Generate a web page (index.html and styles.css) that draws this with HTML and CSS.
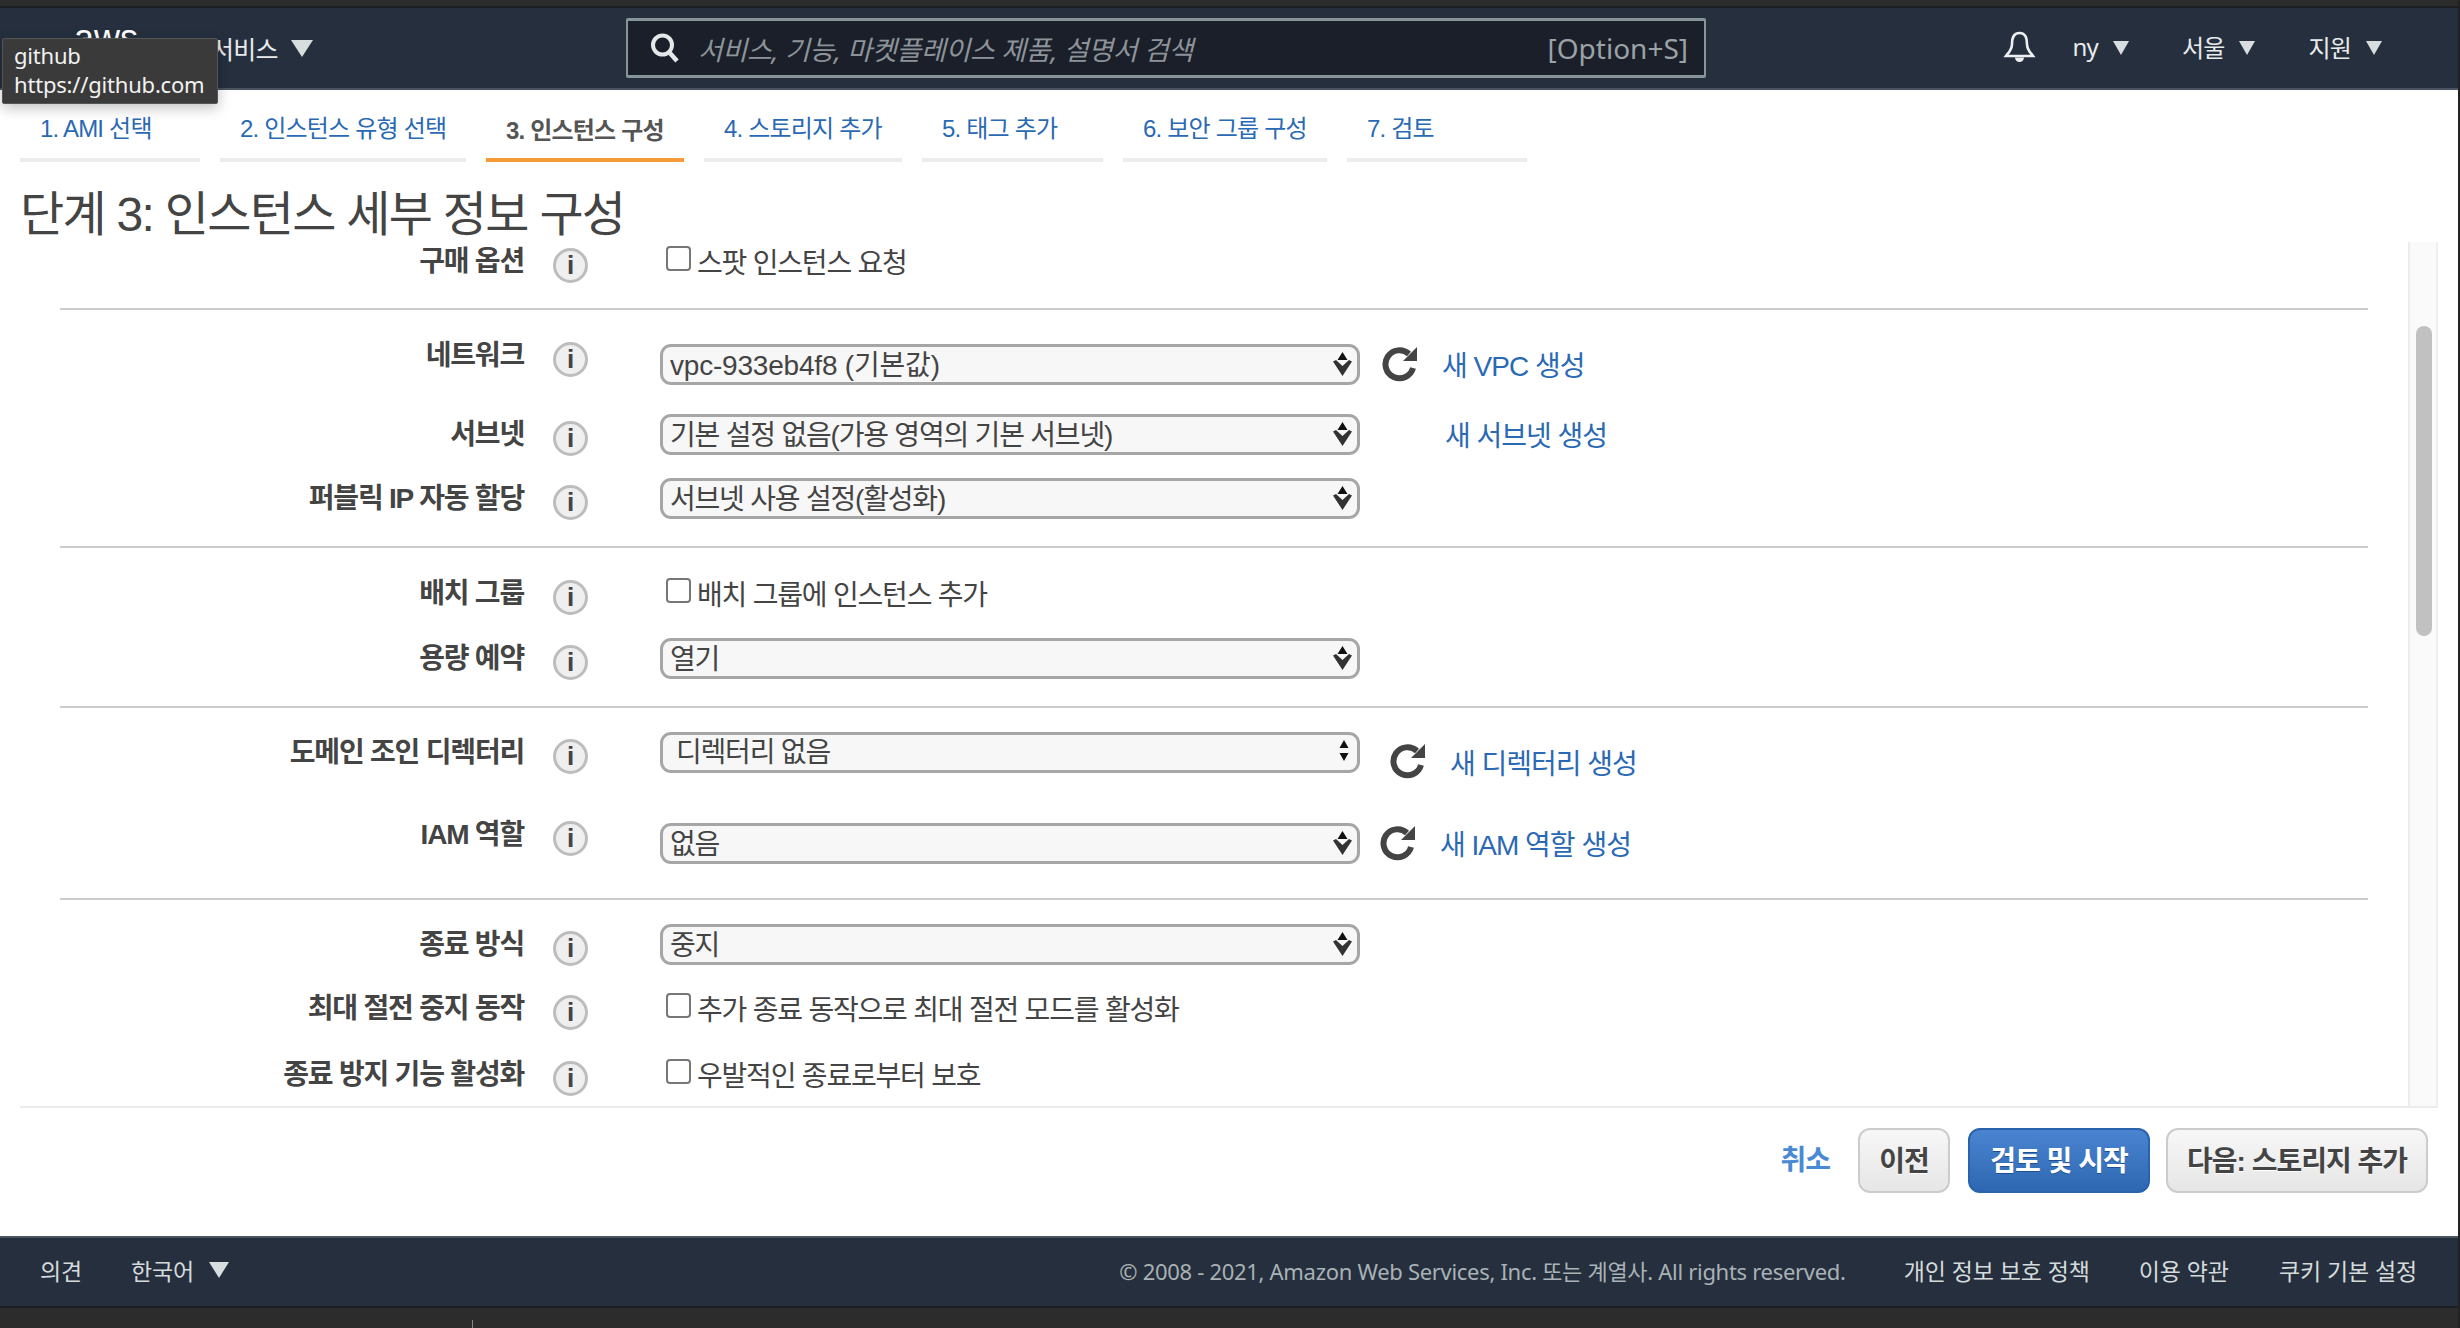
FILE: index.html
```html
<!DOCTYPE html>
<html lang="ko">
<head>
<meta charset="utf-8">
<title>인스턴스 세부 정보 구성</title>
<link rel="stylesheet" href="styles.css">
</head>
<body>
<div class="page">
  <div class="chrome-top"></div>
  <header class="nav">
    <div class="logo">aws</div>
    <div class="nav-services">서비스<span class="caret caret-lg"></span></div>
    <div class="search">
      <svg class="search-icon" viewBox="0 0 30 30"><circle cx="12.5" cy="12" r="9.5" fill="none" stroke="#e4e8e8" stroke-width="4"/><path d="M19 19 L27 28" stroke="#e4e8e8" stroke-width="4.5"/></svg>
      <span class="search-text">서비스, 기능, 마켓플레이스 제품, 설명서 검색</span>
      <span class="search-key">[Option+S]</span>
    </div>
    <div class="nav-right">
      <svg class="bell" viewBox="0 0 35 32"><path d="M17.5 2 C11 2 10 8 10 13 C10 19 7 21 4 25 L31 25 C28 21 25 19 25 13 C25 8 24 2 17.5 2 Z" fill="none" stroke="#eef0f0" stroke-width="2.6"/><path d="M13 26.5 A4.5 4.5 0 0 0 22 26.5 Z" fill="#eef0f0"/></svg>
      <span class="nav-item nav-ny">ny<span class="caret"></span></span>
      <span class="nav-item nav-region">서울<span class="caret"></span></span>
      <span class="nav-item nav-support">지원<span class="caret"></span></span>
    </div>
  </header>

  <div class="tooltip">github<br>https://github.com</div>

  <nav class="tabs">
    <a class="tab">1. AMI 선택</a>
    <a class="tab">2. 인스턴스 유형 선택</a>
    <a class="tab tab-active">3. 인스턴스 구성</a>
    <a class="tab">4. 스토리지 추가</a>
    <a class="tab">5. 태그 추가</a>
    <a class="tab">6. 보안 그룹 구성</a>
    <a class="tab">7. 검토</a>
  </nav>

  <main class="main">
    <h1 class="title">단계 3: 인스턴스 세부 정보 구성</h1>
    <div class="panel">
      <div class="form">
        <section class="section s1">
          <div class="row">
            <label class="label">구매 옵션</label><span class="info">i</span>
            <div class="control"><span class="check"></span><span class="check-text">스팟 인스턴스 요청</span></div>
          </div>
        </section>
        <section class="section s2">
          <div class="row">
            <label class="label">네트워크</label><span class="info">i</span>
            <div class="control low">
              <div class="select select-latin"><select><option>vpc-933eb4f8 (기본값)</option></select><svg class="arrows" viewBox="0 0 19 24"><path d="M9.5 0 L14.5 8 L4.5 8 Z" fill="#111"/><path d="M0 9.5 L3 8 L9.5 14 L16 8 L19 9.5 L9.5 24 Z" fill="#333"/></svg></div>
              <svg class="refresh" viewBox="0 0 36 36"><path d="M27 8 A14 14 0 1 0 31 22" fill="none" stroke="#444" stroke-width="6"/><path d="M35 1 L35 15 L21 15 Z" fill="#444"/></svg>
              <a class="link link-vpc">새 VPC 생성</a>
            </div>
          </div>
          <div class="row gap-43">
            <label class="label">서브넷</label><span class="info">i</span>
            <div class="control">
              <div class="select"><select><option>기본 설정 없음(가용 영역의 기본 서브넷)</option></select><svg class="arrows" viewBox="0 0 19 24"><path d="M9.5 0 L14.5 8 L4.5 8 Z" fill="#111"/><path d="M0 9.5 L3 8 L9.5 14 L16 8 L19 9.5 L9.5 24 Z" fill="#333"/></svg></div>
              <a class="link link-subnet">새 서브넷 생성</a>
            </div>
          </div>
          <div class="row gap-28">
            <label class="label">퍼블릭 IP 자동 할당</label><span class="info">i</span>
            <div class="control">
              <div class="select"><select><option>서브넷 사용 설정(활성화)</option></select><svg class="arrows" viewBox="0 0 19 24"><path d="M9.5 0 L14.5 8 L4.5 8 Z" fill="#111"/><path d="M0 9.5 L3 8 L9.5 14 L16 8 L19 9.5 L9.5 24 Z" fill="#333"/></svg></div>
            </div>
          </div>
        </section>
        <section class="section s3">
          <div class="row">
            <label class="label">배치 그룹</label><span class="info">i</span>
            <div class="control"><span class="check"></span><span class="check-text">배치 그룹에 인스턴스 추가</span></div>
          </div>
          <div class="row gap-29">
            <label class="label">용량 예약</label><span class="info">i</span>
            <div class="control">
              <div class="select"><select><option>열기</option></select><svg class="arrows" viewBox="0 0 19 24"><path d="M9.5 0 L14.5 8 L4.5 8 Z" fill="#111"/><path d="M0 9.5 L3 8 L9.5 14 L16 8 L19 9.5 L9.5 24 Z" fill="#333"/></svg></div>
            </div>
          </div>
        </section>
        <section class="section s4">
          <div class="row">
            <label class="label">도메인 조인 디렉터리</label><span class="info">i</span>
            <div class="control">
              <div class="select select-native"><select><option>디렉터리 없음</option></select><svg class="arrows arrows-sm" viewBox="0 0 10 22"><path d="M5 0 L9.5 8 L0.5 8 Z" fill="#111"/><path d="M0.5 13 L9.5 13 L5 21 Z" fill="#111"/></svg></div>
              <svg class="refresh refresh-dir" viewBox="0 0 36 36"><path d="M27 8 A14 14 0 1 0 31 22" fill="none" stroke="#444" stroke-width="6"/><path d="M35 1 L35 15 L21 15 Z" fill="#444"/></svg>
              <a class="link link-dir">새 디렉터리 생성</a>
            </div>
          </div>
          <div class="row gap-46">
            <label class="label">IAM 역할</label><span class="info">i</span>
            <div class="control low">
              <div class="select"><select><option>없음</option></select><svg class="arrows" viewBox="0 0 19 24"><path d="M9.5 0 L14.5 8 L4.5 8 Z" fill="#111"/><path d="M0 9.5 L3 8 L9.5 14 L16 8 L19 9.5 L9.5 24 Z" fill="#333"/></svg></div>
              <svg class="refresh refresh-iam" viewBox="0 0 36 36"><path d="M27 8 A14 14 0 1 0 31 22" fill="none" stroke="#444" stroke-width="6"/><path d="M35 1 L35 15 L21 15 Z" fill="#444"/></svg>
              <a class="link link-iam">새 IAM 역할 생성</a>
            </div>
          </div>
        </section>
        <section class="section s5">
          <div class="row">
            <label class="label">종료 방식</label><span class="info">i</span>
            <div class="control">
              <div class="select"><select><option>중지</option></select><svg class="arrows" viewBox="0 0 19 24"><path d="M9.5 0 L14.5 8 L4.5 8 Z" fill="#111"/><path d="M0 9.5 L3 8 L9.5 14 L16 8 L19 9.5 L9.5 24 Z" fill="#333"/></svg></div>
            </div>
          </div>
          <div class="row gap-28">
            <label class="label">최대 절전 중지 동작</label><span class="info">i</span>
            <div class="control"><span class="check"></span><span class="check-text">추가 종료 동작으로 최대 절전 모드를 활성화</span></div>
          </div>
          <div class="row gap-30">
            <label class="label">종료 방지 기능 활성화</label><span class="info">i</span>
            <div class="control"><span class="check"></span><span class="check-text">우발적인 종료로부터 보호</span></div>
          </div>
        </section>
      </div>
      <div class="scrolltrack"><div class="scrollthumb"></div></div>
    </div>
    <div class="actions">
      <a class="cancel">취소</a>
      <button class="btn btn-prev">이전</button>
      <button class="btn btn-primary">검토 및 시작</button>
      <button class="btn btn-next">다음: 스토리지 추가</button>
    </div>
  </main>

  <footer class="footer">
    <span class="foot-feedback">의견</span>
    <span class="foot-lang">한국어<span class="caret caret-foot"></span></span>
    <span class="foot-copy">© 2008 - 2021, Amazon Web Services, Inc. 또는 계열사. All rights reserved.</span>
    <span class="foot-link foot-privacy">개인 정보 보호 정책</span>
    <span class="foot-link foot-terms">이용 약관</span>
    <span class="foot-link foot-cookie">쿠키 기본 설정</span>
  </footer>
  <div class="chrome-bottom"><span class="chrome-tick"></span></div>
</div>
</body>
</html>
```
FILE: styles.css
```css
* { box-sizing: border-box; }
html, body { margin: 0; padding: 0; background: #fff; }
body { width: 2460px; height: 1328px; overflow: hidden; font-family: "Liberation Sans", "Noto Sans CJK KR", sans-serif; color: #444; }
.page { position: relative; width: 2460px; height: 1328px; display: flex; flex-direction: column; border-right: 2px solid #222; }

.chrome-top { height: 8px; background: #2c2c2c; border-bottom: 2px solid #1b1e22; flex: none; }

.nav { height: 82px; flex: none; background: #252f3e; border-bottom: 2px solid #4b5460; display: flex; align-items: center; position: relative; color: #e8ebeb; font-family: "Noto Sans", "Noto Sans CJK KR", sans-serif; }
.logo { margin-left: 74px; width: 64px; font-family: "Liberation Sans", sans-serif; font-weight: 400; font-size: 36px; line-height: 38px; margin-top: -20px; color: #fff; }
.nav-services { margin-left: 73px; font-size: 25px; letter-spacing: -0.8px; display: flex; align-items: center; width: 103px; white-space: nowrap; }
.caret { display: inline-block; width: 0; height: 0; border-left: 8.5px solid transparent; border-right: 8.5px solid transparent; border-top: 14px solid #d8dddd; flex: none; }
.caret-lg { border-left-width: 11px; border-right-width: 11px; border-top-width: 17px; margin-left: 13px; }
.search { margin-left: 312px; width: 1080px; height: 60px; background: #1a1f29; border: 2px solid #87949a; border-top-width: 3px; border-bottom-width: 3px; border-radius: 2px; display: flex; align-items: center; padding: 0 16px 0 22px; }
.search-icon { width: 30px; height: 30px; flex: none; }
.search-text { margin-left: 18px; font-size: 27px; font-style: italic; color: #8d9499; letter-spacing: -0.3px; white-space: nowrap; }
.search-key { margin-left: auto; font-size: 28px; color: #9aa2a6; }
.nav-right { margin-left: auto; display: flex; align-items: center; padding-right: 76px; }
.bell { width: 35px; height: 32px; margin-top: -2px; }
.nav-item { display: inline-flex; align-items: center; font-size: 24px; letter-spacing: -0.8px; margin-top: -3px; }
.nav-item .caret { margin-left: 15px; margin-top: 3px; }
.nav-ny { margin-left: 35px; }
.nav-region { margin-left: 53px; }
.nav-support { margin-left: 53px; }

.tooltip { position: absolute; left: 2px; top: 38px; width: 216px; height: 66px; background: #3a3a3a; border: 1px solid #555; border-radius: 2px; color: #f2f2f2; font-family: "Noto Sans", sans-serif; font-size: 22px; line-height: 29px; padding: 2px 11px; box-shadow: 0 4px 14px rgba(0,0,0,.25); z-index: 5; letter-spacing: -0.2px; white-space: nowrap; }

.tabs { flex: none; height: 72px; padding: 0 20px; display: grid; grid-template-columns: 180px 246px 198px 198px 181px 204px 180px; column-gap: 20px; justify-content: start; }
.tab { display: block; height: 72px; padding: 24px 0 0 20px; font-size: 24px; line-height: 30px; color: #2a69b4; border-bottom: 4px solid #ececec; letter-spacing: -0.8px; white-space: nowrap; }
.tab-active { color: #555; font-weight: 700; border-bottom-color: #f49a38; padding-top: 26px; }

.main { flex: 1; min-height: 0; padding: 0 20px; display: flex; flex-direction: column; }
.title { margin: 0; height: 80px; flex: none; padding-top: 29px; font-weight: 400; font-size: 48px; line-height: 48px; color: #444; letter-spacing: -1.7px; white-space: nowrap; }

.panel { flex: none; height: 866px; display: flex; border-bottom: 2px solid #ececec; overflow: hidden; width: 2418px; }
.form { flex: 1; padding: 0 40px; min-width: 0; overflow: hidden; }
.section { border-bottom: 2px solid #ccc; }
.s1 { height: 68px; padding-top: 2px; }
.s2 { height: 238px; padding-top: 28px; }
.s3 { height: 160px; padding-top: 28px; }
.s4 { height: 192px; padding-top: 27px; }
.s5 { border-bottom: 0; padding-top: 27px; }

.row { display: flex; align-items: flex-start; height: 36px; }
.gap-28 { margin-top: 28px; }
.gap-29 { margin-top: 29px; }
.gap-30 { margin-top: 30px; }
.gap-43 { margin-top: 43px; }
.gap-46 { margin-top: 46px; }

.label { width: 464px; text-align: right; font-weight: 700; font-size: 28px; line-height: 36px; color: #444; letter-spacing: -1.2px; white-space: nowrap; flex: none; }
.info { flex: none; width: 35px; height: 35px; margin: 4px 0 0 29px; border-radius: 50%; background: #efefef; border: 3px solid #bdbdbd; color: #444; font-family: "Liberation Sans", sans-serif; font-weight: 700; font-size: 26px; line-height: 28px; text-align: center; }
.control { margin-left: 72px; display: flex; align-items: center; height: 36px; flex: 1; min-width: 0; }
.low { margin-top: 9px; }
.select { position: relative; width: 700px; height: 41px; flex: none; margin-top: -2px; }
.select select { appearance: none; -webkit-appearance: none; width: 100%; height: 100%; background: #f7f7f7; border: 3px solid #a6a6a6; border-radius: 11px; color: #444; padding: 2px 0 0 7px; font-family: "Liberation Sans", "Noto Sans CJK KR", sans-serif; font-size: 28px; letter-spacing: -1.2px; outline: none; }
.select-latin select { letter-spacing: -0.2px; }
.select-native select { padding-left: 13px; padding-top: 0; }
.arrows { position: absolute; right: 8px; top: 8px; width: 19px; height: 24px; pointer-events: none; }
.arrows-sm { right: 11px; width: 10px; height: 22px; }
.refresh { flex: none; width: 36px; height: 36px; margin-left: 22px; margin-top: -2px; }
.refresh-dir { margin-left: 30px; margin-top: 16px; }
.refresh-iam { margin-left: 20px; }
.link { color: #2a69b4; font-size: 28px; letter-spacing: -1px; white-space: nowrap; margin-top: -3px; }
.link-vpc { margin-left: 24px; }
.link-subnet { margin-left: 85px; }
.link-dir { margin-left: 24px; margin-top: 18px; }
.link-iam { margin-left: 24px; }
.check { flex: none; width: 25px; height: 25px; margin: -7px 0 0 6px; border: 2px solid #777; border-radius: 4px; background: #fff; }
.check-text { margin-left: 6px; margin-top: -3px; font-size: 28px; letter-spacing: -1.2px; color: #444; white-space: nowrap; }

.scrolltrack { flex: none; width: 30px; background: #fafafa; border-left: 2px solid #ececec; border-right: 2px solid #f0f0f0; padding: 84px 0 0 6px; }
.scrollthumb { width: 16px; height: 310px; background: #c1c1c1; border-radius: 8px; }

.actions { flex: none; height: 128px; padding: 20px 10px 0 0; display: flex; align-items: flex-start; justify-content: flex-end; }
.cancel { color: #4a8ad4; font-weight: 700; font-size: 28px; line-height: 65px; letter-spacing: -1px; margin-right: 28px; }
.btn { height: 65px; border-radius: 12px; border: 2px solid #ccc; font-family: "Liberation Sans", "Noto Sans CJK KR", sans-serif; font-size: 28px; font-weight: 700; background: linear-gradient(#f7f7f7, #e6e6e6); color: #444; letter-spacing: -1px; padding: 0 0 4px; text-shadow: 0 1px 0 #fff; }
.btn-prev { width: 92px; margin-right: 18px; }
.btn-primary { width: 182px; margin-right: 16px; background: linear-gradient(#4a85d2, #2e67b1); border-color: #2a62ac; color: #fff; text-shadow: 0 1px 0 #1f4f8f; }
.btn-next { width: 262px; }

.footer { flex: none; height: 70px; background: #252f3e; border-top: 2px solid #4b5460; padding-bottom: 5px; display: flex; align-items: center; color: #d5dbdb; font-family: "Noto Sans", "Noto Sans CJK KR", sans-serif; font-size: 23px; letter-spacing: -0.1px; white-space: nowrap; }
.foot-feedback { margin-left: 40px; width: 91px; }
.foot-lang { display: inline-flex; align-items: center; }
.caret-foot { border-left-width: 10px; border-right-width: 10px; border-top-width: 16px; margin-left: 15px; }
.foot-copy { margin-left: auto; color: #a9b2b5; font-size: 22px; letter-spacing: -0.3px; }
.foot-privacy { margin-left: 58px; }
.foot-terms { margin-left: 49px; }
.foot-cookie { margin: 0 41px 0 50px; }

.chrome-bottom { flex: none; height: 22px; background: #2c2c2c; border-top: 2px solid #1b1e22; position: relative; }
.chrome-tick { position: absolute; left: 472px; bottom: 0; width: 1px; height: 8px; background: #888; }
```
